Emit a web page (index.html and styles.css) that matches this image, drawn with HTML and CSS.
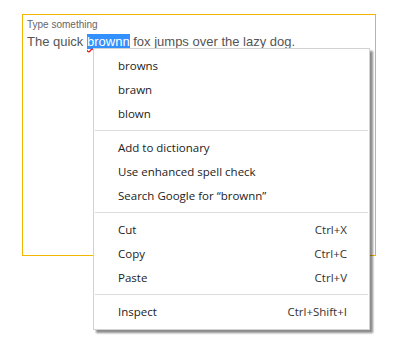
FILE: index.html
```html
<!DOCTYPE html>
<html>
<head>
	<title>Spell check menu</title>
	<meta charset="utf-8">
	<link rel="stylesheet" href="styles.css">
</head>
<body>
	<div class="field">
		<div class="fieldLabel">Type something</div>
		<div class="fieldText">The quick <span class="misspelled">brownn</span> fox jumps over the lazy dog.</div>
	</div>

	<div class="contextMenu">
		<div class="menuItem">browns</div>
		<div class="menuItem">brawn</div>
		<div class="menuItem">blown</div>
		<div class="separator"></div>
		<div class="menuItem">Add to dictionary</div>
		<div class="menuItem">Use enhanced spell check</div>
		<div class="menuItem">Search Google for “brownn”</div>
		<div class="separator"></div>
		<div class="menuItem"><span>Cut</span><span class="shortcut">Ctrl+X</span></div>
		<div class="menuItem"><span>Copy</span><span class="shortcut">Ctrl+C</span></div>
		<div class="menuItem"><span>Paste</span><span class="shortcut">Ctrl+V</span></div>
		<div class="separator"></div>
		<div class="menuItem"><span>Inspect</span><span class="shortcut">Ctrl+Shift+I</span></div>
	</div>
</body>
</html>
```

FILE: styles.css
```css
body {
	padding: 0;
	margin: 0;
	background: #fff;
	font-family: "Liberation Sans", Arial, sans-serif;
}

.field {
	margin: 14px 0 0 22px;
	width: 344px;
	height: 240px;
	border: 1px solid #f2b500;
	padding: 0 4px;
}

.fieldLabel {
	font-size: 10px;
	line-height: 13px;
	padding-top: 3px;
	color: #666;
}

.fieldText {
	font-size: 13px;
	line-height: 16px;
	padding-top: 3px;
	color: #555;
}

.misspelled {
	background: #3390ff;
	color: #fff;
	text-decoration: underline wavy #e02020;
	text-decoration-skip-ink: none;
	text-underline-offset: 2px;
}

.contextMenu {
	position: absolute;
	left: 93px;
	top: 48px;
	width: 275px;
	padding: 5px 0 5px;
	background: #fff;
	border: 1px solid #d2d2d2;
	box-shadow: 3px 3px 2px rgba(0, 0, 0, 0.45);
	font-family: "Open Sans", sans-serif;
	font-size: 11.5px;
	color: #222;
}

.menuItem {
	display: flex;
	justify-content: space-between;
	height: 24px;
	line-height: 24px;
	padding: 0 22px 0 24px;
}

.shortcut {
	color: #333;
}

.separator {
	height: 1px;
	margin: 4px 1px 5px;
	background: #dcdcdc;
}

.separator:last-of-type {
	margin-bottom: 6px;
}
```
